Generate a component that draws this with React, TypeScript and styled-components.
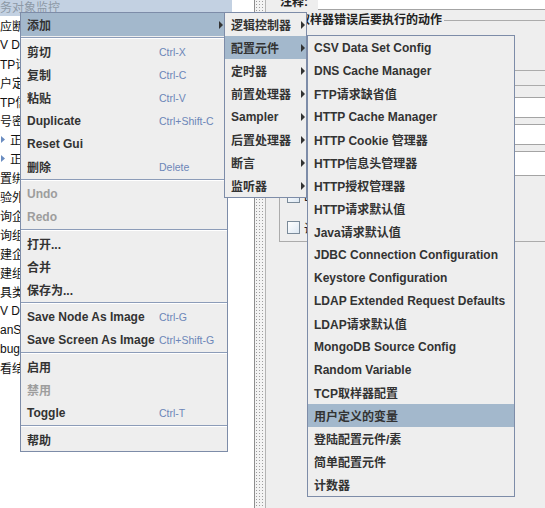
import React, { FC } from "react";
import styled, { createGlobalStyle } from "styled-components";

const UI_FONT = `"Liberation Sans", "Noto Sans CJK SC", sans-serif`;

const GlobalStyle = createGlobalStyle`
  html, body {
    margin: 0;
    padding: 0;
  }
  body {
    width: 545px;
    height: 508px;
    overflow: hidden;
    background: #eeeeee;
    font-family: ${UI_FONT};
    font-size: 12px;
    color: #333333;
  }
`;

type Entry =
  | { label: string; accel?: string; sub?: boolean; active?: boolean; disabled?: boolean }
  | "sep";

const EDIT_MENU: Entry[] = [
  { label: "添加", sub: true, active: true },
  "sep",
  { label: "剪切", accel: "Ctrl-X" },
  { label: "复制", accel: "Ctrl-C" },
  { label: "粘贴", accel: "Ctrl-V" },
  { label: "Duplicate", accel: "Ctrl+Shift-C" },
  { label: "Reset Gui" },
  { label: "删除", accel: "Delete" },
  "sep",
  { label: "Undo", disabled: true },
  { label: "Redo", disabled: true },
  "sep",
  { label: "打开..." },
  { label: "合并" },
  { label: "保存为..." },
  "sep",
  { label: "Save Node As Image", accel: "Ctrl-G" },
  { label: "Save Screen As Image", accel: "Ctrl+Shift-G" },
  "sep",
  { label: "启用" },
  { label: "禁用", disabled: true },
  { label: "Toggle", accel: "Ctrl-T" },
  "sep",
  { label: "帮助" },
];

const ADD_MENU: Entry[] = [
  { label: "逻辑控制器", sub: true },
  { label: "配置元件", sub: true, active: true },
  { label: "定时器", sub: true },
  { label: "前置处理器", sub: true },
  { label: "Sampler", sub: true },
  { label: "后置处理器", sub: true },
  { label: "断言", sub: true },
  { label: "监听器", sub: true },
];

const CONFIG_MENU: Entry[] = [
  "CSV Data Set Config",
  "DNS Cache Manager",
  "FTP请求缺省值",
  "HTTP Cache Manager",
  "HTTP Cookie 管理器",
  "HTTP信息头管理器",
  "HTTP授权管理器",
  "HTTP请求默认值",
  "Java请求默认值",
  "JDBC Connection Configuration",
  "Keystore Configuration",
  "LDAP Extended Request Defaults",
  "LDAP请求默认值",
  "MongoDB Source Config",
  "Random Variable",
  "TCP取样器配置",
  "用户定义的变量",
  "登陆配置元件/素",
  "简单配置元件",
  "计数器",
].map((label) => ({ label, active: label === "用户定义的变量" }));

// clipped tree labels, as far as they show left of the popup
const TREE_ROWS = [
  "务对象监控",
  "应断",
  "V D",
  "TP请",
  "户定",
  "TP信",
  "号密",
  "正",
  "正",
  "置绑",
  "验外",
  "询企",
  "询组",
  "建企",
  "建组",
  "具类",
  "V D",
  "anS",
  "bug",
  "看结",
];

const Screen = styled.div`
  position: relative;
  display: flex;
  width: 545px;
  height: 508px;
  overflow: hidden;
`;

/* ---------- left tree ---------- */

const Tree = styled.div`
  width: 254px;
  flex: none;
  background: #ffffff;
  overflow: hidden;
`;

const TreeList = styled.ul`
  list-style: none;
  margin: -3px 0 0;
  padding: 0;
`;

const TreeRow = styled.li<{ $selected?: boolean }>`
  display: flex;
  align-items: center;
  gap: 5px;
  width: ${(p) => (p.$selected ? "232px" : "auto")};
  height: 19px;
  white-space: nowrap;
  font-size: 12px;
  color: ${(p) => (p.$selected ? "#8d99a6" : "#111111")};
  background: ${(p) => (p.$selected ? "#c3d1e2" : "transparent")};
`;

const Handle = styled.svg`
  flex: none;
  margin-left: 1px;
`;

const Splitter = styled.div`
  width: 10px;
  flex: none;
  border-left: 1px solid #8e8e8e;
  border-right: 1px solid #b4b4b4;
  background-color: #f3f3f3;
  background-image: radial-gradient(#9c9c9c 0.7px, transparent 0.9px);
  background-size: 3px 3px;
`;

/* ---------- right editor panel ---------- */

const Editor = styled.div`
  flex: 1;
  padding-left: 13px;
  background: #eeeeee;
  overflow: hidden;
`;

const Form = styled.div`
  width: 320px;
  display: flex;
  flex-direction: column;
`;

const CommentRow = styled.div`
  display: flex;
  align-items: flex-end;
  gap: 10px;
  height: 10px;
  overflow: hidden;
`;

const FieldLabel = styled.span`
  flex: none;
  margin-left: 1px;
  font-weight: bold;
  font-size: 12px;
  line-height: 15px;
  color: #222222;
  white-space: nowrap;
`;

const TextField = styled.div<{ $h: number }>`
  flex: 1;
  height: ${(p) => p.$h}px;
  box-sizing: border-box;
  background: #ffffff;
  border: 1px solid #a4a4a4;
`;

const CommentField = styled.div`
  flex: 1;
  height: 10px;
  box-sizing: border-box;
  background: #ffffff;
  border-bottom: 1px solid #a4a4a4;
`;

const Group = styled.fieldset<{ $h: number; $mt: number }>`
  margin: ${(p) => p.$mt}px 0 0;
  height: ${(p) => p.$h}px;
  box-sizing: border-box;
  padding: 0 0 0 4px;
  border: 1px solid #ababab;
  min-width: 0;
`;

const Legend = styled.legend`
  padding: 0 2px;
  font-weight: bold;
  font-size: 12px;
  line-height: 14px;
  color: #222222;
`;

const Row = styled.div<{ $h: number; $mt: number }>`
  display: flex;
  align-items: center;
  gap: 4px;
  height: ${(p) => p.$h}px;
  margin: ${(p) => p.$mt}px 0 0 3px;
  white-space: nowrap;
`;

const Check = styled.span<{ $round?: boolean }>`
  flex: none;
  width: 13px;
  height: 13px;
  box-sizing: border-box;
  border: 1px solid #7a8a99;
  border-radius: ${(p) => (p.$round ? "50%" : "0")};
  background: linear-gradient(135deg, #ffffff 0%, #dde8f3 100%);
`;

const PlainText = styled.span`
  font-size: 12px;
  color: #222222;
`;

/* ---------- popup menus ---------- */

const Popup = styled.div<{
  $left: number;
  $top: number;
  $width: number;
  $z: number;
  $labelWidth: string;
  $padRight: number;
}>`
  position: absolute;
  left: ${(p) => p.$left}px;
  top: ${(p) => p.$top}px;
  width: ${(p) => p.$width}px;
  z-index: ${(p) => p.$z};
  box-sizing: border-box;
  display: flex;
  flex-direction: column;
  background: #eeeeee;
  border: 1px solid #7d8ca8;
  --label-w: ${(p) => p.$labelWidth};
  --pad-r: ${(p) => p.$padRight}px;
`;

const Item = styled.div<{ $active?: boolean; $disabled?: boolean }>`
  flex: none;
  height: 23px;
  display: grid;
  grid-template-columns: var(--label-w) 1fr auto;
  align-items: center;
  padding: 0 var(--pad-r) 0 6px;
  background: ${(p) => (p.$active ? "#a3b8cc" : "transparent")};
  color: ${(p) => (p.$disabled ? "#9d9d9d" : "#333333")};
  font-weight: bold;
  font-size: 12px;
  white-space: nowrap;
`;

const Accel = styled.span`
  font-weight: normal;
  font-size: 10.5px;
  color: #6c86b8;
`;

const Separator = styled.div`
  flex: none;
  height: 4px;
  display: flex;
  flex-direction: column;
  justify-content: center;
  &::before {
    content: "";
    height: 1px;
    background: #8c9cb8;
  }
  &::after {
    content: "";
    height: 1px;
    background: #ffffff;
  }
`;

const SubArrow = () => (
  <svg width="4" height="8" viewBox="0 0 4 8">
    <polygon points="0,0 4,4 0,8" fill="#333333" />
  </svg>
);

interface PopupMenuProps {
  entries: Entry[];
  left: number;
  top: number;
  width: number;
  z: number;
  labelWidth?: string;
  padRight?: number;
}

const PopupMenu: FC<PopupMenuProps> = ({
  entries,
  left,
  top,
  width,
  z,
  labelWidth = "auto",
  padRight = 4,
}) => (
  <Popup
    $left={left}
    $top={top}
    $width={width}
    $z={z}
    $labelWidth={labelWidth}
    $padRight={padRight}
  >
    {entries.map((e, i) =>
      e === "sep" ? (
        <Separator key={i} />
      ) : (
        <Item key={i} $active={e.active} $disabled={e.disabled}>
          <span>{e.label}</span>
          {e.accel ? <Accel>{e.accel}</Accel> : <span />}
          {e.sub ? <SubArrow /> : <span />}
        </Item>
      )
    )}
  </Popup>
);

export default function App() {
  return (
    <>
      <GlobalStyle />
      <Screen>
        <Tree>
          <TreeList>
            {TREE_ROWS.map((t, i) => (
              <TreeRow key={i} $selected={i === 0}>
                {(i === 7 || i === 8) && (
                  <Handle width="4" height="7" viewBox="0 0 4 7">
                    <polygon points="0,0 4,3.5 0,7" fill="#6a8cc0" />
                  </Handle>
                )}
                {t}
              </TreeRow>
            ))}
          </TreeList>
        </Tree>
        <Splitter />
        <Editor>
          <Form>
            <CommentRow>
              <FieldLabel>注释:</FieldLabel>
              <CommentField />
            </CommentRow>
            <Group $h={58} $mt={3}>
              <Legend>在取样器错误后要执行的动作</Legend>
              <Row $h={16} $mt={10}>
                <Check $round />
                <PlainText>继续</PlainText>
                <Check $round />
                <PlainText>启动下一进程循环</PlainText>
              </Row>
            </Group>
            <Group $h={164} $mt={7}>
              <Legend>线程属性</Legend>
              <Row $h={21} $mt={5}>
                <PlainText>线程数:</PlainText>
                <TextField $h={21} />
              </Row>
              <Row $h={21} $mt={6}>
                <PlainText>Ramp-Up Period (in seconds):</PlainText>
                <TextField $h={21} />
              </Row>
              <Row $h={25} $mt={6}>
                <PlainText>循环次数</PlainText>
                <Check />
                <PlainText>永远</PlainText>
                <TextField $h={25} />
              </Row>
              <Row $h={13} $mt={14}>
                <Check />
                <PlainText>Delay Thread creation until needed</PlainText>
              </Row>
              <Row $h={13} $mt={18}>
                <Check />
                <PlainText>调度器</PlainText>
              </Row>
            </Group>
          </Form>
        </Editor>

        <PopupMenu entries={EDIT_MENU} left={20} top={12} width={208} z={1} labelWidth="132px" padRight={4} />
        <PopupMenu entries={ADD_MENU} left={224} top={12} width={83} z={2} padRight={1} />
        <PopupMenu entries={CONFIG_MENU} left={307} top={35} width={208} z={3} />
      </Screen>
    </>
  );
}
